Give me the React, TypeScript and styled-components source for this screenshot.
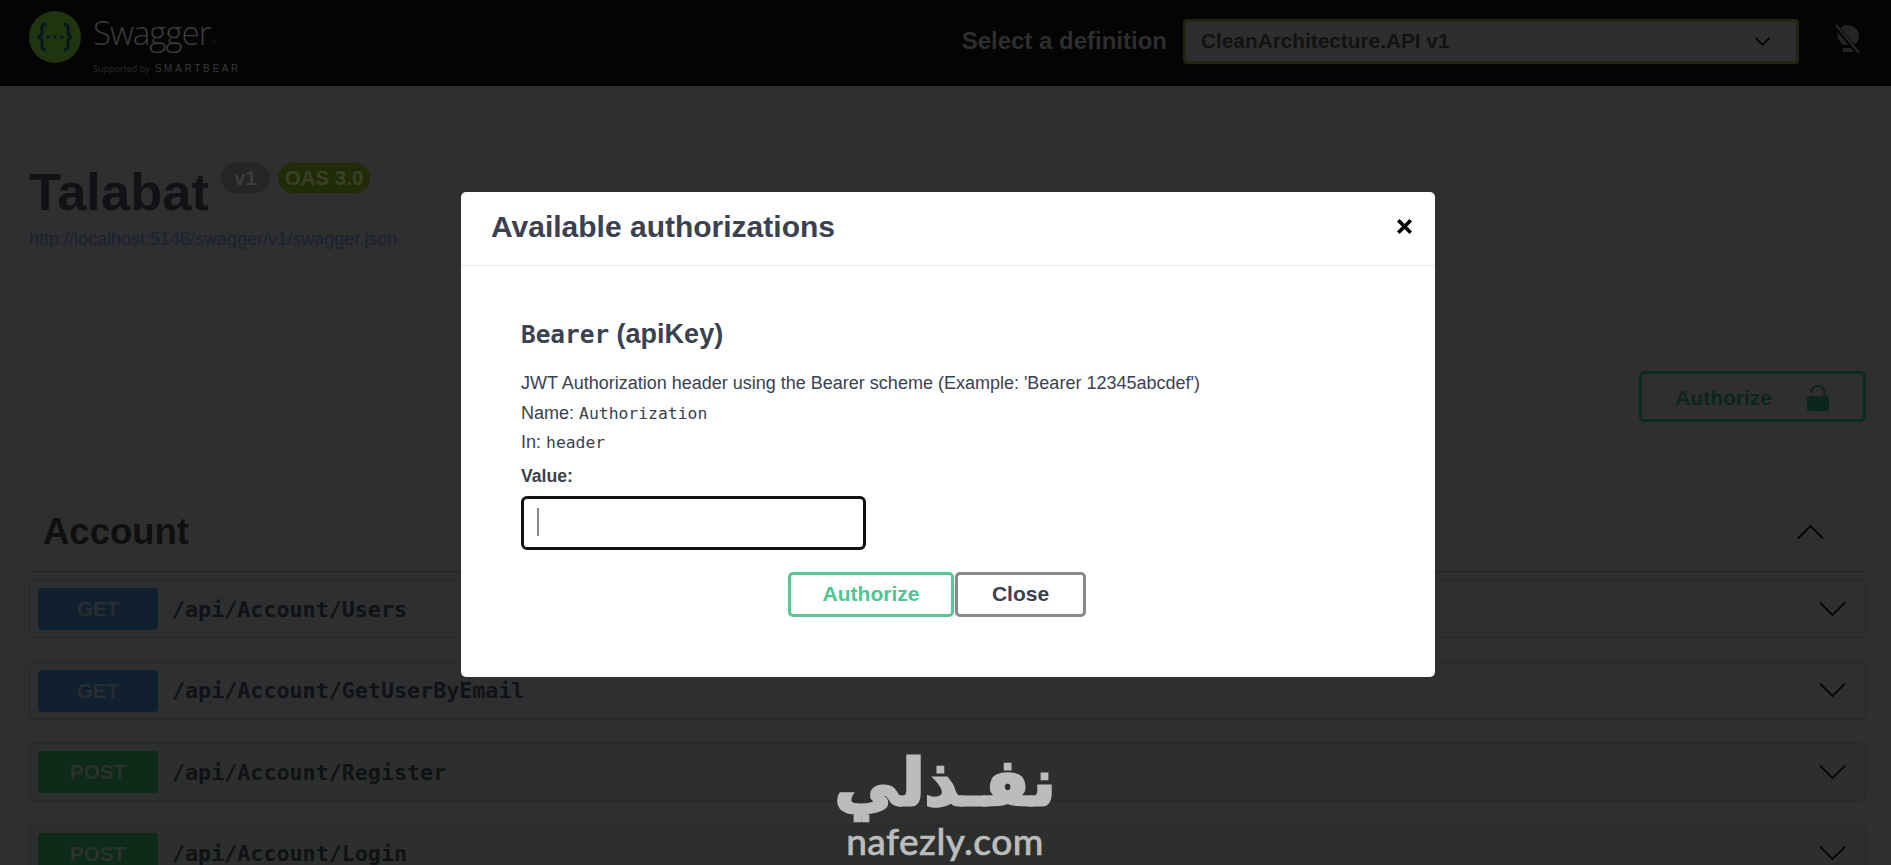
import React from "react";
import styled, { createGlobalStyle } from "styled-components";

const Global = createGlobalStyle`
  html, body { margin: 0; padding: 0; background: #2f2f2f; }
  body { width: 1891px; height: 865px; overflow: hidden; font-family: "Liberation Sans", Arial, sans-serif; position: relative; }
  * { box-sizing: border-box; }
`;

const MONO = `"DejaVu Sans Mono", "Liberation Mono", monospace`;

const Page = styled.div`
  display: flex;
  flex-direction: column;
  height: 865px;
  overflow: hidden;
  background: #2f2f2f;
`;

const Topbar = styled.header`
  flex: none;
  height: 86px;
  background: #040404;
  display: flex;
  align-items: center;
  padding: 0 29px;
`;

const Brand = styled.div`
  display: flex;
  align-items: flex-start;
  gap: 12px;
  margin-right: auto;
  height: 74px;
  padding-top: 11px;
  margin-top: -12px;
`;

const BrandText = styled.div`
  display: flex;
  flex-direction: column;
  margin-top: 2px;
`;

const BrandName = styled.span`
  font-family: "Open Sans", sans-serif;
  font-weight: 300;
  font-size: 33px;
  line-height: 40px;
  letter-spacing: -1px;
  color: #3c3c3c;
  sup { font-size: 6px; letter-spacing: 0; vertical-align: baseline; margin-left: 2px; }
`;

const Supported = styled.span`
  font-family: "Open Sans", sans-serif;
  font-size: 9px;
  line-height: 12px;
  color: #2c2c2c;
  margin-top: 0;
  white-space: nowrap;
  b {
    font-family: "Liberation Sans", sans-serif;
    font-weight: 400;
    font-size: 10px;
    letter-spacing: 2.7px;
    margin-left: 5px;
    color: #383838;
  }
`;

const DefLabel = styled.span`
  font-size: 24px;
  font-weight: 700;
  color: #2e2e2e;
  margin-right: 16px;
  margin-top: -4px;
`;

const DefSelect = styled.div`
  width: 616px;
  height: 45px;
  margin-top: -4px;
  background: #2e2e2e;
  border: 3px solid #20260f;
  border-radius: 4px;
  display: flex;
  align-items: center;
  justify-content: space-between;
  padding: 0 26px 0 15px;
  font-size: 20.8px;
  font-weight: 700;
  color: #121212;
`;

const BulbButton = styled.div`
  margin-left: 35px;
  margin-right: 1px;
  display: flex;
  margin-top: -8px;
`;

const Content = styled.main`
  flex: 1;
  padding: 0 25px 0 29px;
  display: flex;
  flex-direction: column;
`;

const Info = styled.section`
  margin-top: 76px;
`;

const TitleRow = styled.div`
  display: flex;
  align-items: flex-start;
  height: 66px;
`;

const Title = styled.h1`
  margin: 0;
  font-size: 52.5px;
  line-height: 60px;
  font-weight: 700;
  color: #101216;
  margin-right: 12px;
`;

const Badge = styled.span<{ $bg: string; $fg: string; $pad: number }>`
  margin-top: 1px;
  margin-right: 8px;
  height: 30px;
  padding: 0 ${(p) => p.$pad}px;
  border-radius: 15px;
  display: flex;
  align-items: center;
  font-size: 20.5px;
  font-weight: 700;
  background: ${(p) => p.$bg};
  color: ${(p) => p.$fg};
`;

const SpecLink = styled.a`
  display: block;
  font-size: 18px;
  line-height: 22px;
  color: #1a2233;
`;

const AuthRow = styled.div`
  display: flex;
  justify-content: flex-end;
  margin-top: 121px;
`;

const AuthTop = styled.div`
  width: 227px;
  height: 51px;
  border: 3px solid #0d2c20;
  border-radius: 5px;
  display: flex;
  align-items: center;
  justify-content: flex-end;
  gap: 35px;
  padding: 3px 34px 0 0;
  font-size: 21px;
  font-weight: 700;
  color: #0c261b;
`;

const SectionHead = styled.div`
  margin-top: 78px;
  height: 72px;
  border-bottom: 1px solid #222424;
  display: flex;
  align-items: flex-start;
  justify-content: space-between;
  padding: 12px 40px 0 14px;
  margin-right: 2px;
`;

const SectionTitle = styled.h2`
  margin: 0;
  font-size: 36.5px;
  line-height: 40px;
  font-weight: 700;
  color: #0f0f0f;
`;

const Chevron = styled.svg`
  display: block;
  flex: none;
`;

const SectionChevron = styled(Chevron)`
  margin-top: 12px;
`;

const Rows = styled.div`
  margin-top: 8px;
  display: flex;
  flex-direction: column;
  gap: 23.5px;
`;

const Row = styled.div<{ $kind: "get" | "post" }>`
  flex: none;
  height: 58px;
  display: flex;
  align-items: center;
  padding: 0 19px 0 8px;
  border-radius: 5px;
  border: 1px solid ${(p) => (p.$kind === "get" ? "#25292c" : "#232b27")};
  background: ${(p) => (p.$kind === "get" ? "#2d2f31" : "#2c2f2d")};
`;

const Method = styled.span<{ $kind: "get" | "post" }>`
  flex: none;
  width: 120px;
  height: 42px;
  border-radius: 4px;
  display: flex;
  align-items: center;
  justify-content: center;
  font-size: 20.5px;
  font-weight: 700;
  background: ${(p) => (p.$kind === "get" ? "#11202f" : "#0e2a19")};
  color: ${(p) => (p.$kind === "get" ? "#2a2d30" : "#2c322e")};
`;

const Path = styled.span`
  margin-left: 14px;
  font-family: ${MONO};
  font-weight: 700;
  font-size: 21.7px;
  color: #101215;
  margin-right: auto;
`;

const Backdrop = styled.div`
  position: absolute;
  inset: 0;
  display: flex;
  justify-content: center;
  align-items: flex-start;
  padding: 192px 0 0 5px;
`;

const Modal = styled.div`
  position: relative;
  width: 974px;
  height: 485px;
  background: #fff;
  border-radius: 5px;
  color: #3b4151;
`;

const ModalHeader = styled.div`
  height: 74px;
  border-bottom: 1px solid #ebebeb;
  display: flex;
  align-items: center;
  justify-content: space-between;
  padding: 0 22px 4px 30px;
`;

const ModalTitle = styled.h3`
  margin: 0;
  font-size: 30px;
  font-weight: 700;
  color: #3b4151;
`;

const ModalBody = styled.div`
  padding: 52px 60px 0;
`;

const SchemeTitle = styled.h4`
  margin: 0 0 18px;
  font-size: 27px;
  line-height: 32px;
  font-weight: 700;
  color: #3b4151;
`;

const SchemeCode = styled.code`
  font-family: ${MONO};
  font-size: 24.4px;
  font-weight: 700;
`;

const Line = styled.p`
  margin: 0;
  height: 29.5px;
  display: flex;
  align-items: center;
  font-size: 18px;
  white-space: pre;
  color: #3b4151;
`;

const InlineCode = styled.code`
  font-family: ${MONO};
  font-size: 16.4px;
`;

const ValueLabel = styled.label`
  display: block;
  margin-top: 7px;
  font-size: 17.6px;
  font-weight: 700;
  line-height: 22px;
  color: #3b4151;
`;

const InputWrap = styled.div`
  position: relative;
  margin-top: 9px;
  width: 345px;
  height: 54px;
`;

const Input = styled.input`
  width: 100%;
  height: 100%;
  border: 3px solid #101010;
  border-radius: 6px;
  outline: none;
  background: #fff;
`;

const Caret = styled.span`
  position: absolute;
  left: 16px;
  top: 12px;
  width: 2px;
  height: 28px;
  background: #8a8a8a;
`;

const Actions = styled.div`
  display: flex;
  margin: 22px 0 0 267px;
  gap: 1px;
`;

const ModalButton = styled.button<{ $tone: string; $text: string; $w: number }>`
  width: ${(p) => p.$w}px;
  height: 45px;
  border: 3px solid ${(p) => p.$tone};
  border-radius: 5px;
  background: #fff;
  color: ${(p) => p.$text};
  font-family: "Liberation Sans", sans-serif;
  font-size: 21px;
  font-weight: 700;
  padding: 0;
`;

const Watermark = styled.div`
  position: absolute;
  left: 835px;
  top: 747px;
  width: 220px;
  display: flex;
  flex-direction: column;
  align-items: center;
  color: #bcbcbc;
  pointer-events: none;
`;

const WatermarkAr = styled.span`
  font-family: "DejaVu Sans", sans-serif;
  font-weight: 700;
  font-size: 65px;
  line-height: 72px;
  white-space: nowrap;
  -webkit-text-stroke: 3px #bcbcbc;
`;

const WatermarkEn = styled.span`
  font-family: "Lato", sans-serif;
  font-weight: 500;
  font-size: 37px;
  line-height: 38px;
  letter-spacing: 0.5px;
  margin-top: 3px;
  -webkit-text-stroke: 0.6px #bcbcbc;
`;

const Down = ({ w = 27, c = "#040404", sw = 1.8 }: { w?: number; c?: string; sw?: number }) => (
  <Chevron width={w} height={w * 0.6} viewBox="0 0 27 16" fill="none">
    <path d="M1 1.5 L13.5 14 L26 1.5" stroke={c} strokeWidth={sw} />
  </Chevron>
);

const SwaggerLogo = () => (
  <svg width="52" height="52" viewBox="0 0 52 52">
    <circle cx="26" cy="26" r="26" fill="#20340f" />
    <path d="M17 13c-5 0-4 4-4 7s0 5-4 6c4 1 4 3 4 6s-1 7 4 7M35 13c5 0 4 4 4 7s0 5 4 6c-4 1-4 3-4 6s1 7-4 7" fill="none" stroke="#081620" strokeWidth="3" />
    <circle cx="19" cy="26" r="1.7" fill="#081620" />
    <circle cx="26" cy="26" r="1.7" fill="#081620" />
    <circle cx="33" cy="26" r="1.7" fill="#081620" />
  </svg>
);

const BulbOff = () => (
  <svg width="27" height="30" viewBox="0 0 27 30">
    <path d="M13 1c7 0 12 5 12 11 0 4-2 7-5 9H9L4 15C2 8 6 1 13 1z" fill="#242424" />
    <rect x="9" y="24" width="11" height="4" fill="#242424" />
    <path d="M2 2 L25 30" stroke="#040404" strokeWidth="5" />
    <path d="M2 1 L25 29" stroke="#242424" strokeWidth="2.4" />
  </svg>
);

const Lock = () => (
  <svg width="22" height="26" viewBox="0 0 22 26">
    <path d="M4.5 8V7a6.5 6 0 0 1 13 0v5" fill="none" stroke="#0c261b" strokeWidth="2.2" />
    <rect x="0" y="11" width="22" height="15" rx="2" fill="#0c261b" />
  </svg>
);

const CloseIcon = () => (
  <svg width="17" height="17" viewBox="0 0 15 15">
    <path d="M2 2 L13 13 M13 2 L2 13" stroke="#000" strokeWidth="3.2" />
  </svg>
);

const endpoints: { kind: "get" | "post"; label: string; path: string }[] = [
  { kind: "get", label: "GET", path: "/api/Account/Users" },
  { kind: "get", label: "GET", path: "/api/Account/GetUserByEmail" },
  { kind: "post", label: "POST", path: "/api/Account/Register" },
  { kind: "post", label: "POST", path: "/api/Account/Login" },
];

export default function App() {
  return (
    <>
      <Global />
      <Page>
        <Topbar>
          <Brand>
            <SwaggerLogo />
            <BrandText>
              <BrandName>Swagger<sup>™</sup></BrandName>
              <Supported>Supported by<b>SMARTBEAR</b></Supported>
            </BrandText>
          </Brand>
          <DefLabel>Select a definition</DefLabel>
          <DefSelect>
            CleanArchitecture.API v1
            <Down w={15} c="#000" sw={3} />
          </DefSelect>
          <BulbButton><BulbOff /></BulbButton>
        </Topbar>
        <Content>
          <Info>
            <TitleRow>
              <Title>Talabat</Title>
              <Badge $bg="#232527" $fg="#3a3c3e" $pad={13}>v1</Badge>
              <Badge $bg="#222b08" $fg="#3a3f28" $pad={7}>OAS 3.0</Badge>
            </TitleRow>
            <SpecLink>http://localhost:5146/swagger/v1/swagger.json</SpecLink>
          </Info>
          <AuthRow>
            <AuthTop>
              Authorize
              <Lock />
            </AuthTop>
          </AuthRow>
          <SectionHead>
            <SectionTitle>Account</SectionTitle>
            <SectionChevron width="27" height="16" viewBox="0 0 27 16" fill="none">
              <path d="M1 14.5 L13.5 2 L26 14.5" stroke="#040404" strokeWidth="1.8" />
            </SectionChevron>
          </SectionHead>
          <Rows>
            {endpoints.map((e) => (
              <Row key={e.path} $kind={e.kind}>
                <Method $kind={e.kind}>{e.label}</Method>
                <Path>{e.path}</Path>
                <Down />
              </Row>
            ))}
          </Rows>
        </Content>
      </Page>
      <Backdrop>
        <Modal>
          <ModalHeader>
            <ModalTitle>Available authorizations</ModalTitle>
            <CloseIcon />
          </ModalHeader>
          <ModalBody>
            <SchemeTitle><SchemeCode>Bearer</SchemeCode> (apiKey)</SchemeTitle>
            <Line>JWT Authorization header using the Bearer scheme (Example: 'Bearer 12345abcdef')</Line>
            <Line>Name: <InlineCode>Authorization</InlineCode></Line>
            <Line>In: <InlineCode>header</InlineCode></Line>
            <ValueLabel>Value:</ValueLabel>
            <InputWrap>
              <Input aria-label="Value" />
              <Caret />
            </InputWrap>
            <Actions>
              <ModalButton $tone="#55c896" $text="#4fc690" $w={166}>Authorize</ModalButton>
              <ModalButton $tone="#888888" $text="#3b4151" $w={131}>Close</ModalButton>
            </Actions>
          </ModalBody>
        </Modal>
      </Backdrop>
      <Watermark>
        <WatermarkAr dir="rtl" lang="ar">نفـذلي</WatermarkAr>
        <WatermarkEn>nafezly.com</WatermarkEn>
      </Watermark>
    </>
  );
}
